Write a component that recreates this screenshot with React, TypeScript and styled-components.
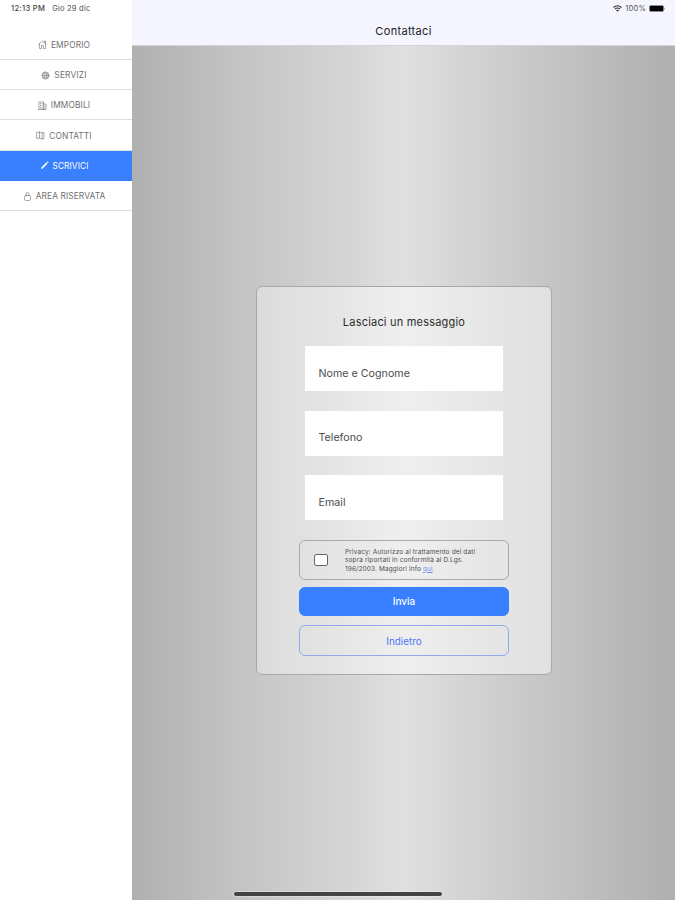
import React from "react";
import styled, { createGlobalStyle } from "styled-components";

const GlobalStyle = createGlobalStyle`
  * { box-sizing: border-box; }
  body { margin: 0; background: #fff; font-family: Inter, "Liberation Sans", sans-serif; }
`;

const Screen = styled.div`
  width: 675px;
  height: 900px;
  display: flex;
  overflow: hidden;
  position: relative;
`;

const Sidebar = styled.aside`
  width: 132px;
  flex: none;
  background: #fff;
`;

const StatusTime = styled.div`
  height: 29.6px;
  padding: 3px 0 0 11px;
  display: flex;
  gap: 7px;
  font-size: 7.6px;
  line-height: 11px;
  letter-spacing: 0.18px;
  color: #555;
  white-space: nowrap;
`;

const Clock = styled.span`
  color: #444;
  font-weight: 500;
  letter-spacing: 0.28px;
`;

const MenuItem = styled.a<{ $active?: boolean }>`
  height: 30.3px;
  display: flex;
  align-items: center;
  justify-content: center;
  gap: 4px;
  padding: 1px 4px 0 0;
  border-bottom: 1px solid ${(p) => (p.$active ? "#3880ff" : "#dedede")};
  background: ${(p) => (p.$active ? "#3880ff" : "#fff")};
  color: ${(p) => (p.$active ? "#fff" : "#707070")};
  font-size: 8.4px;
  line-height: 10px;
  white-space: nowrap;

  svg { width: 9px; height: 9px; flex: none; }
`;

const MenuLabel = styled.span<{ $spacing: number }>`
  letter-spacing: ${(p) => p.$spacing}px;
`;

const Main = styled.main`
  width: 543px;
  display: flex;
  flex-direction: column;
`;

const Header = styled.header`
  height: 46px;
  flex: none;
  background: #f4f5fe;
  border-bottom: 1px solid #d4d4da;
`;

const StatusIcons = styled.div`
  height: 17px;
  padding: 0 9px 0 0;
  display: flex;
  justify-content: flex-end;
  align-items: center;
  gap: 3px;
  font-size: 7.6px;
  letter-spacing: 0.15px;
  color: #555;
`;

const Title = styled.h1`
  margin: 7px 0 0;
  font-size: 11px;
  line-height: 15px;
  font-weight: 400;
  letter-spacing: 0.32px;
  text-align: center;
  color: #202024;
`;

const Content = styled.section`
  flex: 1;
  padding: 240px 0 0 124px;
  background: linear-gradient(90deg, #b0b0b0 0%, #c4c4c4 20%, #d5d5d5 40%, #e0e0e0 50%, #d3d3d3 62%, #c4c4c4 78%, #afafaf 100%);
`;

const Card = styled.form`
  width: 296px;
  height: 389px;
  padding: 27px 42px 0;
  display: flex;
  flex-direction: column;
  border: 1px solid #a8a8a8;
  border-radius: 6px;
  background: linear-gradient(90deg, rgba(255, 255, 255, 0.36), rgba(255, 255, 255, 0.48) 50%, rgba(255, 255, 255, 0.48));
`;

const CardTitle = styled.h2`
  margin: 0 0 16px;
  font-size: 11px;
  line-height: 16px;
  font-weight: 400;
  letter-spacing: 0.2px;
  text-align: center;
  color: #2c2c2c;
`;

const Field = styled.label`
  height: 45px;
  margin: 0 6px 19.5px;
  padding: 19.5px 0 0 13.5px;
  background: #fff;
  font-size: 10.7px;
  line-height: 16px;
  color: #4c4c4c;
`;

const Privacy = styled.div`
  height: 40px;
  flex: none;
  display: flex;
  align-items: center;
  padding: 1px 0 0 14px;
  border: 1px solid #aaa;
  border-radius: 6px;
`;

const Check = styled.span`
  width: 14px;
  height: 12.5px;
  border: 1px solid #666;
  border-radius: 2px;
  background: #fff;
`;

const PrivacyText = styled.div`
  padding: 1px 0 0 17px;
  font-size: 6.5px;
  line-height: 8.5px;
  color: #505050;
  white-space: nowrap;
`;

const PrivacyLine = styled.div<{ $spacing: number }>`
  letter-spacing: ${(p) => p.$spacing}px;
`;

const InfoLink = styled.a`
  color: #6f8cf0;
  text-decoration: underline;
`;

const Button = styled.button<{ $outline?: boolean }>`
  height: ${(p) => (p.$outline ? 31 : 29)}px;
  flex: none;
  margin: ${(p) => (p.$outline ? "9px" : "7px")} 0 0;
  padding: ${(p) => (p.$outline ? "1px 0 0" : "0")};
  border: 1px solid ${(p) => (p.$outline ? "#93a9ef" : "#3880ff")};
  border-radius: 6px;
  background: ${(p) => (p.$outline ? "transparent" : "#3880ff")};
  color: ${(p) => (p.$outline ? "#4c76f5" : "#fff")};
  font-family: inherit;
  font-size: ${(p) => (p.$outline ? 9.9 : 10)}px;
  font-weight: ${(p) => (p.$outline ? 400 : 500)};
`;

const HomeIndicator = styled.div`
  position: absolute;
  left: 234px;
  top: 891.5px;
  width: 208px;
  height: 4px;
  border-radius: 2px;
  background: #444;
  box-shadow: 0 0 1px 1px rgba(255, 255, 255, 0.3);
`;

const Line = ({ children }: { children: React.ReactNode }) => (
  <svg viewBox="0 0 18 18" fill="none" stroke="currentColor" strokeWidth="1.2" strokeLinejoin="round" strokeLinecap="round">
    {children}
  </svg>
);

const icons = {
  home: <Line><path d="M1 9 9 2l8 7M3 8v9h4v-6h4v6h4V8M13 5V2h2v5" /></Line>,
  globe: <Line><circle cx="9" cy="9" r="7" /><ellipse cx="9" cy="9" rx="3.2" ry="7" /><path d="M2 9h14M4 4.5c3 2 7 2 10 0M4 13.5c3-2 7-2 10 0" /></Line>,
  building: <Line><path d="M2 17V2h9v15M11 6h5v11H1M5 5v1M8 5v1M5 9v1M8 9v1M5 13v1M8 13v4M13 10v1M13 14v1" /></Line>,
  map: <Line><path d="m2 3 5-1 5 2 4-1v12l-4 1-5-2-5 1zM7 2v12M12 4v12" /></Line>,
  lock: <Line><rect x="3" y="7" width="12" height="10" rx="3" /><path d="M6 7V4a3 3 0 0 1 6 0v3" /></Line>,
  pencil: (
    <svg viewBox="0 0 18 18" fill="currentColor"><path d="m2 16 1-3.5L12.5 3l2.3 2.3L5.5 15zM13.4 2.2l1-1c1-.7 3.1 1.4 2.4 2.3l-1 1z" /></svg>
  ),
};

const entries: { icon: keyof typeof icons; label: string; spacing: number; active?: boolean }[] = [
  { icon: "home", label: "EMPORIO", spacing: 0.1 },
  { icon: "globe", label: "SERVIZI", spacing: 0.15 },
  { icon: "building", label: "IMMOBILI", spacing: 0.1 },
  { icon: "map", label: "CONTATTI", spacing: 0.1 },
  { icon: "pencil", label: "SCRIVICI", spacing: 0.05, active: true },
  { icon: "lock", label: "AREA RISERVATA", spacing: 0.09 },
];

export default function App() {
  return (
    <Screen>
      <GlobalStyle />
      <Sidebar>
        <StatusTime><Clock>12:13 PM</Clock><span>Gio 29 dic</span></StatusTime>
        <nav>
          {entries.map((e) => (
            <MenuItem key={e.label} $active={e.active}>
              {icons[e.icon]}
              <MenuLabel $spacing={e.spacing}>{e.label}</MenuLabel>
            </MenuItem>
          ))}
        </nav>
      </Sidebar>
      <Main>
        <Header>
          <StatusIcons>
            <svg width="9" height="7" viewBox="0 0 18 14" fill="none" stroke="#333" strokeWidth="2.3">
              <path d="M1 5Q9-2 17 5M4 8q5-4 10 0" /><path d="m6 10.5 3 3 3-3Q9 8 6 10.5Z" fill="#333" stroke="none" />
            </svg>
            <span>100%</span>
            <svg width="17" height="7" viewBox="0 0 17 7">
              <rect x=".4" y=".4" width="14.2" height="6.2" rx="1.5" fill="#000" stroke="#999" strokeWidth=".6" />
              <path d="M15.4 2.2q1.5 1.3 0 2.6Z" fill="#888" />
            </svg>
          </StatusIcons>
          <Title>Contattaci</Title>
        </Header>
        <Content>
          <Card>
            <CardTitle>Lasciaci un messaggio</CardTitle>
            <Field>Nome e Cognome</Field>
            <Field>Telefono</Field>
            <Field>Email</Field>
            <Privacy>
              <Check />
              <PrivacyText>
                <PrivacyLine $spacing={0.14}>Privacy: Autorizzo al trattamento dei dati</PrivacyLine>
                <PrivacyLine $spacing={0.12}>sopra riportati in conformità al D.Lgs.</PrivacyLine>
                <PrivacyLine $spacing={0.12}>196/2003. Maggiori info <InfoLink>qui</InfoLink></PrivacyLine>
              </PrivacyText>
            </Privacy>
            <Button type="button">Invia</Button>
            <Button type="button" $outline>Indietro</Button>
          </Card>
        </Content>
      </Main>
      <HomeIndicator />
    </Screen>
  );
}
